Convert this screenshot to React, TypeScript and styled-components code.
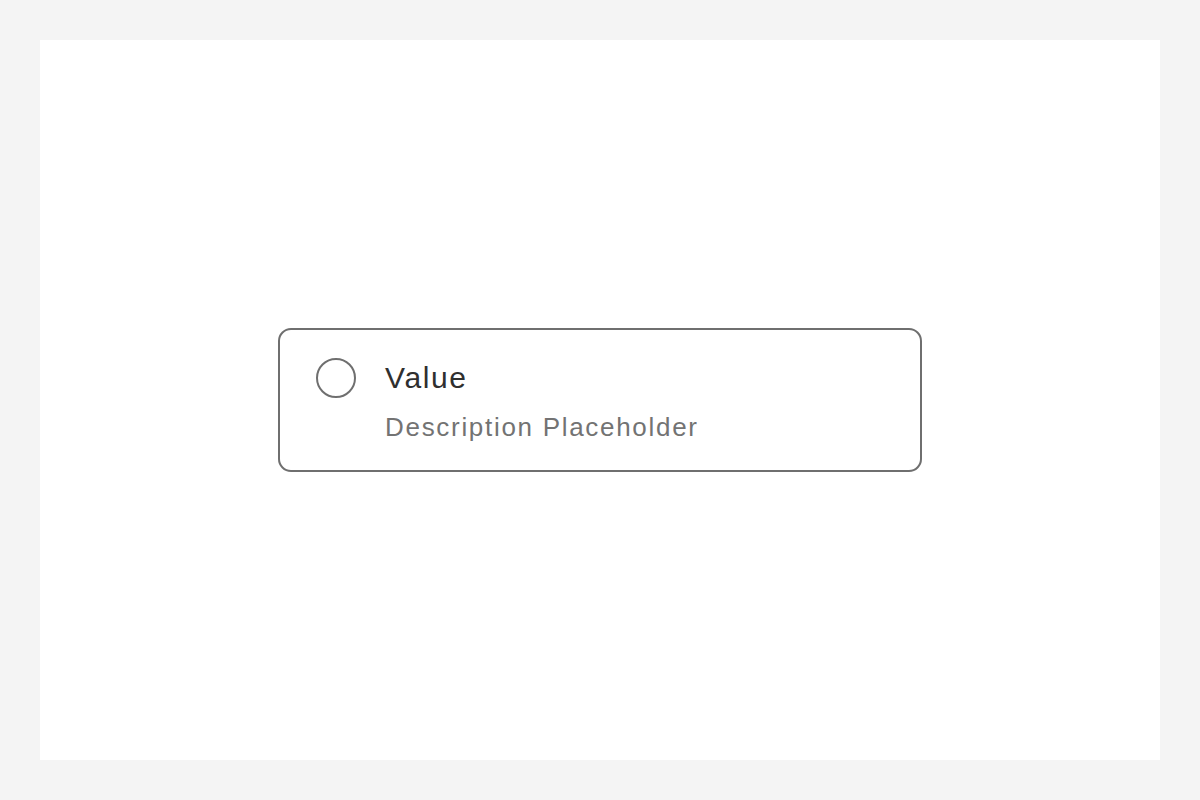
import React from 'react'
import styled, { createGlobalStyle } from 'styled-components'

const GlobalStyle = createGlobalStyle`
html, body {
    margin: 0;
    padding: 0;
    background: #f4f4f4;
}
`;

function App() {
    return (
        <Page>
            <GlobalStyle />
            <Canvas>
                <OptionCard>
                    <Radio />
                    <TextBlock>
                        <Value>Value</Value>
                        <Description>Description Placeholder</Description>
                    </TextBlock>
                </OptionCard>
            </Canvas>
        </Page>
    )
}

export default App

const Page = styled.div`
box-sizing: border-box;
width: 1200px;
height: 800px;
padding: 40px;
background: #f4f4f4;
`;

const Canvas = styled.div`
width: 100%;
height: 100%;
background: #ffffff;
display: flex;
align-items: center;
justify-content: center;
`;

const OptionCard = styled.div`
box-sizing: border-box;
width: 644px;
display: flex;
align-items: flex-start;
gap: 29px;
padding: 28px 36px 25px 36px;
border: 2px solid #6f6f6f;
border-radius: 13px;
background: #ffffff;
font-family: "Liberation Sans", Arial, sans-serif;
`;

const Radio = styled.div`
box-sizing: border-box;
flex: none;
width: 40px;
height: 40px;
border: 2px solid #6f6f6f;
border-radius: 50%;
`;

const TextBlock = styled.div`
display: flex;
flex-direction: column;
gap: 11px;
`;

const Value = styled.div`
font-size: 30px;
line-height: 40px;
letter-spacing: 1.6px;
color: #2f2f2f;
`;

const Description = styled.div`
font-size: 26px;
line-height: 36px;
letter-spacing: 1.7px;
color: #737373;
`;
